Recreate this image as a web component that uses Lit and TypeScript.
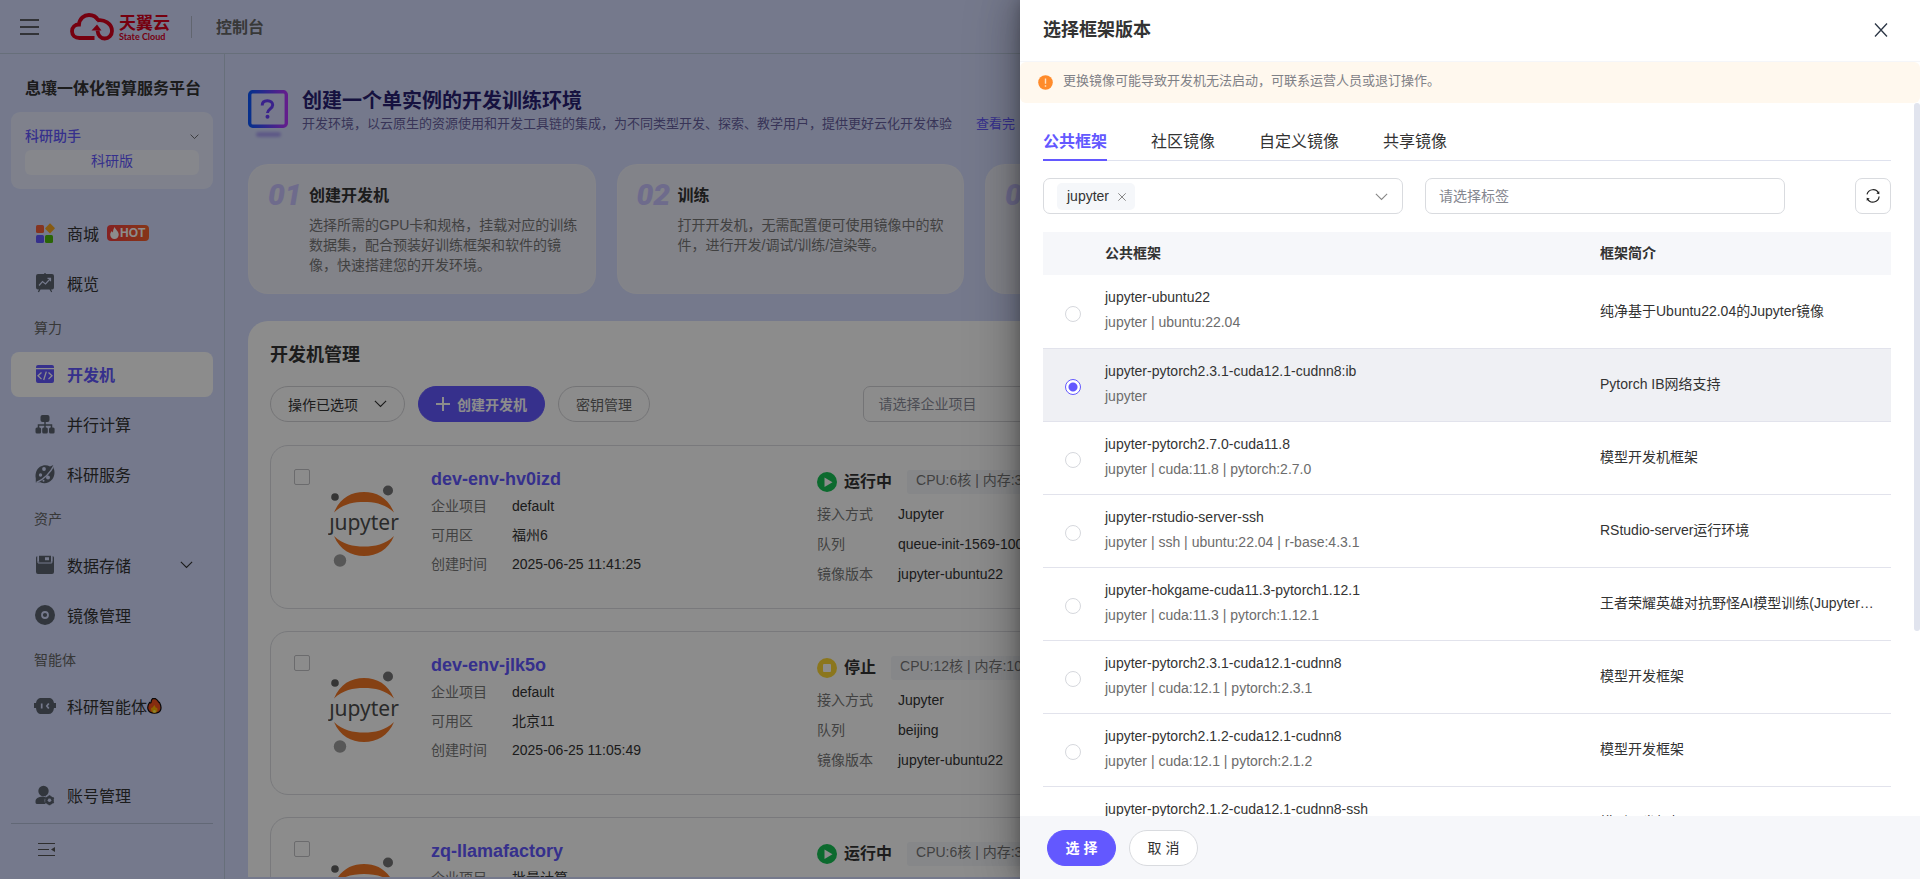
import { LitElement, html, svg, css, nothing } from "lit";
import { customElement, state } from "lit/decorators.js";
import { classMap } from "lit/directives/class-map.js";

interface Machine {
  name: string;
  project: string;
  zone: string;
  created: string;
  running: boolean;
  spec: string;
  access: string;
  queue: string;
  image: string;
}

interface Framework {
  name: string;
  tags: string;
  intro: string;
}

const MACHINES: Machine[] = [
  { name: "dev-env-hv0izd", project: "default", zone: "福州6", created: "2025-06-25 11:41:25", running: true, spec: "CPU:6核 | 内存:30GB", access: "Jupyter", queue: "queue-init-1569-1000", image: "jupyter-ubuntu22" },
  { name: "dev-env-jlk5o", project: "default", zone: "北京11", created: "2025-06-25 11:05:49", running: false, spec: "CPU:12核 | 内存:108GB", access: "Jupyter", queue: "beijing", image: "jupyter-ubuntu22" },
  { name: "zq-llamafactory", project: "批量计算", zone: "", created: "", running: true, spec: "CPU:6核 | 内存:30GB", access: "", queue: "", image: "" },
];

const FRAMEWORKS: Framework[] = [
  { name: "jupyter-ubuntu22", tags: "jupyter | ubuntu:22.04", intro: "纯净基于Ubuntu22.04的Jupyter镜像" },
  { name: "jupyter-pytorch2.3.1-cuda12.1-cudnn8:ib", tags: "jupyter", intro: "Pytorch IB网络支持" },
  { name: "jupyter-pytorch2.7.0-cuda11.8", tags: "jupyter | cuda:11.8 | pytorch:2.7.0", intro: "模型开发机框架" },
  { name: "jupyter-rstudio-server-ssh", tags: "jupyter | ssh | ubuntu:22.04 | r-base:4.3.1", intro: "RStudio-server运行环境" },
  { name: "jupyter-hokgame-cuda11.3-pytorch1.12.1", tags: "jupyter | cuda:11.3 | pytorch:1.12.1", intro: "王者荣耀英雄对抗野怪AI模型训练(Jupyter镜像)" },
  { name: "jupyter-pytorch2.3.1-cuda12.1-cudnn8", tags: "jupyter | cuda:12.1 | pytorch:2.3.1", intro: "模型开发框架" },
  { name: "jupyter-pytorch2.1.2-cuda12.1-cudnn8", tags: "jupyter | cuda:12.1 | pytorch:2.1.2", intro: "模型开发框架" },
  { name: "jupyter-pytorch2.1.2-cuda12.1-cudnn8-ssh", tags: "jupyter | ssh | cuda:12.1 | pytorch:2.1.2", intro: "模型开发框架" },
];

const chevron = (size = 12) => html`<svg class="chevron" width=${size} height=${size} viewBox="0 0 12 12" fill="none" stroke="currentColor" stroke-width="1" aria-hidden="true"><path d="M.8 3.5 6 8.7l5.2-5.2" /></svg>`;

const icons = {
  shop: svg`<rect x="1" y="2" width="8" height="8" rx="1.5" fill="#f2603b"/><path d="m15 .2 4.6 4.6a.8.8 0 0 1 0 1L15 10.500 10.400 5.900a.8.8 0 0 1 0-1z" fill="#f5a623"/><rect x="1" y="12" width="8" height="8" rx="1.500" fill="#6358ff"/><rect x="10" y="12" width="8" height="8" rx="1.500" fill="#4db80b"/>`,
  overview: svg`<path d="M9.300 0h1.400v1h6.300a2 2 0 0 1 2 2v11.500a2 2 0 0 1-2 2h-1l1.200 2.200-1 .6L14.500 16.500h-9L4 19.300l-1.200-.6L4 16.500H3a2 2 0 0 1-2-2V3a2 2 0 0 1 2-2h6.300z"/><path d="m4 12.500 3.500-4 3 2.500 5-5.500M12.500 5.300h3v3" fill="none" stroke="#d5ddff" stroke-width="1.200"/>`,
  code: svg`<path d="M3 1h14a2 2 0 0 1 2 2v1H1V3a2 2 0 0 1 2-2zM1 5.200h18V17a2 2 0 0 1-2 2H3a2 2 0 0 1-2-2z"/><path d="M6.500 8.500 3 11.800l3.500 3.300M13.500 8.500l3.500 3.300-3.500 3.300M11.300 7.600l-2.600 8.400" fill="none" stroke="#fff" stroke-width="1.300"/>`,
  cluster: svg`<rect x="5.500" y="1" width="9" height="7" rx="2"/><path d="M10 7.500v7M3.500 14v-3h13v3" fill="none" stroke="currentColor" stroke-width="1.500"/><rect x=".5" y="13.500" width="5.600" height="6" rx="1.500"/><rect x="7.200" y="13.500" width="5.600" height="6" rx="1.500"/><rect x="14" y="13.500" width="5.600" height="6" rx="1.500"/>`,
  research: svg`<path d="M15 2.500 18.500 1v3c1.500 3 1.500 8-1.200 11.300C14 19.500 9 20.300 5.300 18.300L.8 18.500v-4C-.2 9.500 1.800 5 5 2.800 8 .8 12 .7 15 2.500z"/><path d="M19.500.5c-4 8-9 14-18 18" fill="none" stroke="#d5ddff" stroke-width="1.500"/><g fill="#d5ddff"><circle cx="9" cy="5" r="1.900"/><circle cx="5.500" cy="11" r="1.700"/><circle cx="13" cy="13.500" r="2"/><circle cx="8.500" cy="16.800" r="1"/></g>`,
  storage: svg`<path d="M2.500 1v5.500h15V1C18.500 1 19 2 19 3v14a2 2 0 0 1-2 2H3a2 2 0 0 1-2-2V3c0-1 .5-2 1.500-2z"/><path d="M4 .8h12V6a1 1 0 0 1-1 1H5a1 1 0 0 1-1-1zm6 1.500v3h4v-3z" fill-rule="evenodd"/><path d="M3 1v7h13.800V1" fill="none" stroke="#d5ddff" stroke-width="1"/>`,
  image: svg`<circle cx="10" cy="10" r="10"/><circle cx="10" cy="10" r="3" fill="none" stroke="#d5ddff" stroke-width="1.800"/>`,
  robot: svg`<path d="M6.500 2h7c3.500 0 5 2 5.500 5h2v5h-2c-.5 4-2.500 6-5.500 6h-7C3 18 1.500 16 1 12h-2V7h2c.5-3 2-5 5.500-5z"/><path d="M6.700 7.500v5M13.800 7.500 11.800 10l2 2.500" fill="none" stroke="#d5ddff" stroke-width="1.700"/>`,
  account: svg`<circle cx="8.500" cy="6" r="5.200"/><path d="M8 11.500c1 .6 2 .6 3 0-2 2.500-1.800 5-.5 7.500H2c-1.500 0-1.500-1-1.500-2.500C.5 13.500 3 11.800 8 11.500z"/><circle cx="14.500" cy="15.300" r="3.200" fill="none" stroke="currentColor" stroke-width="2.400"/><path d="M14.500 10.300v10M10.200 12.800l8.600 5M18.800 12.800l-8.600 5" stroke="currentColor" stroke-width="1.800"/><circle cx="14.500" cy="15.300" r="1.700" fill="#d5ddff"/>`,
};

const icon = (name: keyof typeof icons) => html`<svg class="nav-icon" width="20" height="20" viewBox="0 0 20 20" fill="currentColor" aria-hidden="true">${icons[name]}</svg>`;

const jupyterLogo = html`<svg class="logo" width="72" height="84" viewBox="0 0 72 84" role="img" aria-label="jupyter">
  <circle cx="7" cy="13" r="3.800" fill="#616262" /><circle cx="60" cy="6.500" r="5" fill="#767677" /><circle cx="12" cy="76.500" r="6.200" fill="#9e9e9e" />
  <path d="M6 28.500C12 14 23 8 36 8s24 6 30 20.500C57 20 47 18 36 18S15 20 6 28.500z" fill="#f37726" />
  <path d="M6 52c6 14 17 20 30 20s24-6 30-20c-9 8.500-19 10.500-30 10.500S15 60.500 6 52z" fill="#f37726" />
  <text x="36" y="46" text-anchor="middle" class="logo-text">ȷupyter</text>
</svg>`;

@customElement("side-nav")
export class SideNav extends LitElement {
  static styles = css`
    :host { display: flex; flex-direction: column; flex: none; box-sizing: border-box; width: 225px; padding: 20px 11px 6px; border-right: 1px solid #bccadf; color: #333; }
    * { box-sizing: border-box; }
    h2 { margin: 0; padding-left: 14px; font-size: 16px; line-height: 30px; font-weight: 700; white-space: nowrap; }
    .product { margin-top: 8px; padding: 14px; height: 77px; border-radius: 9px; background: rgba(255, 255, 255, .45); }
    .picker { display: flex; align-items: center; justify-content: space-between; width: 100%; height: 20px; padding: 0; border: 0; background: none; font-family: inherit; font-size: 14px; font-weight: 500; line-height: 20px; color: #6358ff; }
    .picker .chevron { color: #444; }
    .edition { margin-top: 4px; height: 25px; line-height: 22px; border-radius: 6px; background: rgba(255, 255, 255, .5); text-align: center; font-size: 14px; color: #6358ff; }
    nav { display: flex; flex-direction: column; flex: 1; margin-top: 22px; }
    ul { display: flex; flex-direction: column; gap: 5px; list-style: none; margin: 0; padding: 0; }
    h3 { margin: 0; padding-left: 23px; height: 46px; font-size: 14px; line-height: 44px; font-weight: 400; color: #666; }
    a { display: flex; align-items: center; height: 45px; padding: 0 20px 2px 24px; border-radius: 8px; font-size: 16px; color: #333; text-decoration: none; white-space: nowrap; }
    a.active { background: #fff; color: #6358ff; font-weight: 700; }
    .nav-icon { flex: none; margin-right: 12px; color: #5b6370; overflow: visible; }
    .active .nav-icon { color: #6358ff; }
    .hot { display: inline-flex; align-items: center; gap: 1px; margin-left: 8px; height: 16px; width: 42px; padding: 0 3px; border-radius: 4px; background: linear-gradient(90deg, #f23d3d, #f5622d); color: #fff; font-size: 12px; font-weight: 700; }
    .grow { flex: 1; }
    .bottom { margin-top: auto; }
    .fold { display: flex; height: 50px; padding: 3px 0 0 27px; align-items: center; border: 0; border-top: 1px solid #b3bed8; margin-top: 5px; width: 100%; background: none; color: #555; }
  `;

  private item(name: keyof typeof icons, label: string, opts: { active?: boolean; extra?: unknown } = {}) {
    return html`<li><a href="#" class=${classMap({ active: !!opts.active })}>${icon(name)}<span>${label}</span>${opts.extra ?? nothing}</a></li>`;
  }

  render() {
    const hot = html`<span class="hot"><svg width="9" height="12" viewBox="0 0 9 12" fill="#fff" aria-hidden="true"><path d="M4.800 0c.3 2.500 3.900 4 3.900 7.500A4.200 4.200 0 0 1 4.500 12 4.200 4.200 0 0 1 .2 7.700c0-1.700 1-2.700 1.600-3.700.4.800.7 1.200 1.200 1.500C3 3.500 3.500 1.500 4.800 0z"/></svg>HOT</span>`;
    const fire = html`<svg width="15" height="16" viewBox="0 0 15 16" aria-hidden="true"><path d="M5.500.7h3C12 3 11.500 5 12.500 4.500c2.500 4.500 2.500 10.700-5 10.700S-.5 9 2.500 4.500c.5.700 1 .5 1.500 0C4.500 3 4 2 5.500.7z" fill="#f4511e" stroke="#111" stroke-width="1.200"/><path d="M4 11c.5-2 1-1 1.500-1.500L7.500 7l1.500 3c1-.5 1.500 0 1.500 2 0 4-6.500 4-6.500-1z" fill="#ffb300"/><path d="M6 13c.5-1.500 2-1.500 3 0 0 2-3 2-3 0z" fill="#ffee58"/></svg>`;
    return html`
      <h2>息壤一体化智算服务平台</h2>
      <div class="product">
        <button class="picker">科研助手 ${chevron(9)}</button>
        <div class="edition">科研版</div>
      </div>
      <nav>
        <ul>${this.item("shop", "商城", { extra: hot })}${this.item("overview", "概览")}</ul>
        <h3>算力</h3>
        <ul>${this.item("code", "开发机", { active: true })}${this.item("cluster", "并行计算")}${this.item("research", "科研服务")}</ul>
        <h3>资产</h3>
        <ul>${this.item("storage", "数据存储", { extra: html`<span class="grow"></span>${chevron(13)}` })}${this.item("image", "镜像管理")}</ul>
        <h3>智能体</h3>
        <ul>${this.item("robot", "科研智能体", { extra: fire })}</ul>
        <ul class="bottom">${this.item("account", "账号管理")}</ul>
      </nav>
      <button class="fold" aria-label="收起菜单"><svg width="18" height="16" viewBox="0 0 18 16" fill="none" stroke="currentColor" stroke-width="1.200"><path d="M0 1.500h17M0 7.500h11M0 13.500h17"/><path d="m17 5-4 2.500 4 2.500z" fill="currentColor" stroke="none"/></svg></button>
    `;
  }
}

@customElement("machine-page")
export class MachinePage extends LitElement {
  static styles = css`
    :host { display: flex; flex-direction: column; flex: 1; min-width: 0; min-height: 0; box-sizing: border-box; padding: 35px 24px 2px 23px; color: #333; overflow: hidden; }
    * { box-sizing: border-box; }
    .hero { display: flex; gap: 14px; }
    .hero h1 { margin: 0; font-size: 20px; line-height: 24px; font-weight: 700; color: #291f73; }
    .hero p { margin: 0; font-size: 13px; line-height: 22px; color: #675f9f; white-space: nowrap; }
    .hero a { margin-left: 24px; color: #6358ff; text-decoration: none; }
    .hero-icon { margin-top: 1px; }
    .steps { display: grid; grid-template-columns: repeat(4, minmax(0, 1fr)); gap: 21px; margin: 24px 195px 0 0; padding: 0; list-style: none; }
    .steps li { display: flex; height: 130px; padding: 16px 17px 0 19px; border-radius: 20px; border: 1px solid rgba(255, 255, 255, .2); background: #edeef9; }
    .no { flex: none; width: 41px; font: italic 900 30px/28px Roboto, sans-serif; color: #c8c3ff; }
    .steps h2 { margin: 4px 0 8px; font-size: 16px; line-height: 22px; font-weight: 700; }
    .steps p { margin: 0; font-size: 14px; line-height: 20px; color: #777; }
    .panel { display: flex; flex-direction: column; flex: 1; min-height: 0; overflow: hidden; margin-top: 27px; padding: 20px 22px 0; border-radius: 20px 20px 0 0; background: #fff; }
    .panel h2 { margin: 0; font-size: 18px; line-height: 28px; font-weight: 700; }
    .bar { display: flex; gap: 13px; margin-top: 17px; }
    .bar button { display: flex; align-items: center; height: 36px; padding: 0 17px 1px; border: 1px solid #d4d4d8; border-radius: 18px; background: #fff; font: inherit; font-size: 14px; color: #333; }
    .bar .primary { background: #6358ff; border-color: #6358ff; color: #fff; font-weight: 700; gap: 7px; }
    .bar .plain { color: #666; }
    .bar .chevron { margin-left: 16px; }
    .filters { display: flex; margin-left: auto; width: 63%; }
    .filters select { width: 360px; height: 36px; padding: 0 14px; border: 1px solid #d4d4d8; border-radius: 7px; background: #fff; appearance: none; font: inherit; font-size: 14px; color: #8b8d9a; }
    .machines { display: flex; flex-direction: column; gap: 22px; margin-top: 23px; }
    .machine { display: flex; flex: none; height: 164px; padding: 20px 23px; border: 1px solid #dcdde2; border-radius: 18px; }
    .machine > input { appearance: none; flex: none; width: 16px; height: 16px; margin: 3px 18px 0 0; border: 1px solid #c3c3c6; border-radius: 2px; background: #fff; }
    .logo { flex: none; margin-top: 18px; width: 72px; height: 84px; }
    .logo-text { font: 400 21px "Noto Sans", sans-serif; fill: #4e4e4e; }
    .left { flex: none; width: 386px; margin-left: 31px; }
    .right { flex: 1; min-width: 0; }
    .name { display: block; font-size: 18px; line-height: 26px; font-weight: 700; color: #6358ff; text-decoration: none; }
    dl { display: grid; grid-template-columns: 81px 1fr; margin: 0; font-size: 14px; white-space: nowrap; }
    .left dl { line-height: 29px; }
    .right dl { line-height: 30px; margin-top: 1px; }
    dt { color: #787878; }
    dd { margin: 0; }
    .status { display: flex; align-items: center; height: 32px; white-space: nowrap; }
    .status b { margin: 0 15px 0 7px; font-size: 16px; line-height: 24px; }
    .spec { height: 24px; padding: 0 9px; border-radius: 3px; background: #f5f6fa; font-size: 14px; line-height: 20px; color: #777; }
  `;

  private machine(m: Machine) {
    const shape = m.running ? svg`<path d="M7.500 5.500v9.500l8-4.700z" fill="#fff"/>` : svg`<rect x="6" y="6" width="8" height="8" rx="1" fill="#fff"/>`;
    return html`
      <article class="machine">
        <input type="checkbox" aria-label=${m.name} />
        ${jupyterLogo}
        <div class="left">
          <a class="name" href="#">${m.name}</a>
          <dl><dt>企业项目</dt><dd>${m.project}</dd><dt>可用区</dt><dd>${m.zone}</dd><dt>创建时间</dt><dd>${m.created}</dd></dl>
        </div>
        <div class="right">
          <div class="status">
            <svg width="20" height="20" viewBox="0 0 20 20" aria-hidden="true"><circle cx="10" cy="10" r="10" fill=${m.running ? "#16c154" : "#fdd835"}/>${shape}</svg>
            <b>${m.running ? "运行中" : "停止"}</b><span class="spec">${m.spec}</span>
          </div>
          <dl><dt>接入方式</dt><dd>${m.access}</dd><dt>队列</dt><dd>${m.queue}</dd><dt>镜像版本</dt><dd>${m.image}</dd></dl>
        </div>
      </article>`;
  }

  render() {
    return html`
      <header class="hero">
        <svg class="hero-icon" width="40" height="50" viewBox="0 0 40 50" aria-hidden="true">
          <defs><linearGradient id="g"><stop stop-color="#0b57ff"/><stop offset="1" stop-color="#b437ff"/></linearGradient><filter id="b" x="-20%" y="-80%" width="140%" height="260%"><feGaussianBlur stdDeviation="1.800"/></filter></defs>
          <rect x="8" y="42" width="25" height="5" rx="2.500" fill="#aaa2f5" filter="url(#b)"/>
          <rect x="1.700" y="1.700" width="36.600" height="34.600" rx="3" fill="#d9dcff" stroke="url(#g)" stroke-width="3.400"/>
          <path d="M14.200 15.500c0-3.300 2.300-4.800 5.200-4.800 3.200 0 5.300 1.700 5.300 4.300 0 3.700-5.200 4-5.200 8" fill="none" stroke="#6a3fff" stroke-width="3"/><circle cx="19.500" cy="26.800" r="2" fill="#6a3fff"/>
        </svg>
        <div>
          <h1>创建一个单实例的开发训练环境</h1>
          <p>开发环境，以云原生的资源使用和开发工具链的集成，为不同类型开发、探索、教学用户，提供更好云化开发体验<a href="#">查看完</a></p>
        </div>
      </header>
      <ol class="steps">
        <li><span class="no">01</span><div><h2>创建开发机</h2><p>选择所需的GPU卡和规格，挂载对应的训练数据集，配合预装好训练框架和软件的镜像，快速搭建您的开发环境。</p></div></li>
        <li><span class="no">02</span><div><h2>训练</h2><p>打开开发机，无需配置便可使用镜像中的软件，进行开发/调试/训练/渲染等。</p></div></li>
        <li><span class="no">03</span></li>
        <li></li>
      </ol>
      <section class="panel">
        <h2>开发机管理</h2>
        <div class="bar">
          <button>操作已选项 ${chevron(13)}</button>
          <button class="primary"><svg width="14" height="14" viewBox="0 0 14 14" stroke="#fff" stroke-width="2" aria-hidden="true"><path d="M7 0v14M0 7h14"/></svg>创建开发机</button>
          <button class="plain">密钥管理</button>
          <div class="filters"><select aria-label="企业项目"><option>请选择企业项目</option></select></div>
        </div>
        <div class="machines">${MACHINES.map((m) => this.machine(m))}</div>
      </section>
    `;
  }
}

@customElement("framework-drawer")
export class FrameworkDrawer extends LitElement {
  @state() private selected = 1;

  static styles = css`
    :host { display: flex; flex-direction: column; width: 900px; max-width: 100%; height: 100%; background: #fff; color: #333; box-shadow: 0 0 54px 8px rgba(0, 0, 0, .12), 0 0 36px rgba(0, 0, 0, .3), 0 0 12px rgba(0, 0, 0, .2); }
    * { box-sizing: border-box; }
    button, input { font: inherit; }
    header { display: flex; align-items: center; justify-content: space-between; height: 62px; padding: 0 32px 2px 23px; border-bottom: 1px solid #f5f6f9; }
    h2 { margin: 0; font-size: 18px; line-height: 28px; font-weight: 700; }
    .close { display: flex; padding: 0; border: 0; background: none; color: #2b3645; }
    .alert { display: flex; align-items: center; gap: 10px; height: 41px; padding: 0 18px 1px; border-radius: 6px; background: #fff8ee; font-size: 13px; line-height: 18px; color: #7f8187; }
    .alert .text { padding-bottom: 2px; }
    .wrap { display: flex; flex: 1; min-height: 0; }
    .body { flex: 1; min-width: 0; overflow: hidden; padding: 18px 23px 0; }
    .track { flex: none; width: 6px; }
    .thumb { height: 74%; border-radius: 5px; background: #e1e4ee; }
    .tabs { display: flex; gap: 44px; height: 40px; border-bottom: 1px solid #dfe2ee; }
    .tabs button { height: 40px; padding: 0; border: 0; border-bottom: 2px solid transparent; background: none; font-size: 16px; color: #333; }
    .tabs .on { font-weight: 700; color: #6358ff; border-color: #6358ff; }
    .query { display: flex; gap: 22px; margin-top: 17px; }
    .field { display: flex; align-items: center; width: 360px; height: 36px; padding: 0 14px 0 13px; border: 1px solid #d9dbdf; border-radius: 7px; background: #fff; font-size: 14px; }
    .field input { flex: 1; min-width: 0; border: 0; padding: 0; outline: 0; background: none; color: #333; }
    .field input::placeholder { color: #85878f; opacity: 1; }
    .field .chevron { color: #888; }
    .chip { display: flex; align-items: center; height: 27px; padding: 0 9px 0 10px; border-radius: 5px; background: #f5f7fa; }
    .chip button { display: flex; margin-left: 9px; padding: 2px 0 0; border: 0; background: none; color: #888; }
    .refresh { display: flex; align-items: center; justify-content: center; width: 36px; height: 36px; margin-left: auto; padding: 0; border: 1px solid #d9dbdf; border-radius: 7px; background: #fff; color: #222; }
    table { width: 100%; margin-top: 18px; border-collapse: collapse; table-layout: fixed; font-size: 14px; text-align: left; }
    .c-pick { width: 62px; }
    .c-intro { width: 291px; }
    th { height: 43px; padding: 0 0 4px; background: #f6f7fa; font-weight: 700; }
    td { height: 73px; padding: 0 0 2px; border-bottom: 1px solid #e2e3ec; vertical-align: middle; }
    tr.picked td { background: #eff0f4; }
    td.pick { padding: 5px 0 0 22px; }
    td.pick input { appearance: none; display: block; width: 16px; height: 16px; margin: 0; border: 1px solid #d6d8dd; border-radius: 50%; background: #fff; }
    td.pick input:checked { border-color: #6358ff; background: radial-gradient(circle, #6358ff 4px, #fff 5px); }
    .fw { display: block; line-height: 25px; }
    .sub { color: #6c6c6c; }
    td.intro { padding: 0 12px 3px 0; overflow: hidden; text-overflow: ellipsis; white-space: nowrap; }
    footer { display: flex; gap: 13px; height: 63px; padding: 14px 27px; background: #f6f7fa; }
    footer button { width: 69px; height: 36px; padding: 0 0 2px; border: 1px solid #d9dbdf; border-radius: 18px; background: #fff; font-size: 14px; color: #333; }
    footer .primary { border-color: #6358ff; background: #6358ff; color: #fff; font-weight: 700; }
  `;

  render() {
    return html`
      <header>
        <h2>选择框架版本</h2>
        <button class="close" aria-label="关闭"><svg width="14" height="14" viewBox="0 0 14 14" fill="none" stroke="currentColor" stroke-width="1.300"><path d="m1 .5 12 13M13 .5 1 13.500"/></svg></button>
      </header>
      <div class="alert" role="alert">
        <svg width="15" height="15" viewBox="0 0 15 15" aria-hidden="true"><circle cx="7.500" cy="7.500" r="7.300" fill="#ff8b2b"/><path d="M7.500 3.500v5.200M7.500 10.200v1.500" stroke="#ffe2c4" stroke-width="1.400"/></svg>
        <span class="text">更换镜像可能导致开发机无法启动，可联系运营人员或退订操作。</span>
      </div>
      <div class="wrap">
        <div class="body">
          <div class="tabs" role="tablist">
            <button role="tab" class="on" aria-selected="true">公共框架</button>
            <button role="tab">社区镜像</button>
            <button role="tab">自定义镜像</button>
            <button role="tab">共享镜像</button>
          </div>
          <div class="query">
            <div class="field">
              <span class="chip">jupyter<button aria-label="移除 jupyter"><svg width="8" height="8" viewBox="0 0 8 8" stroke="currentColor"><path d="m.3.3 7.400 7.400M7.700.3.300 7.700"/></svg></button></span>
              <input type="text" aria-label="框架" />
              ${chevron(13)}
            </div>
            <label class="field"><input type="text" aria-label="标签" placeholder="请选择标签" /></label>
            <button class="refresh" aria-label="刷新"><svg width="16" height="16" viewBox="0 0 16 16" fill="none" stroke="currentColor" stroke-width="1.200"><path d="M2 6.300A6.200 6.200 0 0 1 13.700 5.500M14.100 8.500A6.200 6.200 0 0 1 2.400 10.700"/><path d="M14.300 3.200v3l-3-.6zM1.700 12.800v-3l3 .6z" fill="currentColor" stroke="none"/></svg></button>
          </div>
          <table>
            <colgroup><col class="c-pick" /><col /><col class="c-intro" /></colgroup>
            <thead><tr><th></th><th>公共框架</th><th>框架简介</th></tr></thead>
            <tbody>
              ${FRAMEWORKS.map((f, i) => html`
                <tr class=${classMap({ picked: i === this.selected })}>
                  <td class="pick"><input type="radio" name="framework" aria-label=${f.name} .checked=${i === this.selected} @change=${() => (this.selected = i)} /></td>
                  <td><span class="fw">${f.name}</span><span class="fw sub">${f.tags}</span></td>
                  <td class="intro">${f.intro}</td>
                </tr>`)}
            </tbody>
          </table>
        </div>
        <div class="track"><div class="thumb"></div></div>
      </div>
      <footer><button class="primary">选 择</button><button>取 消</button></footer>
    `;
  }
}

@customElement("app-root")
export class AppRoot extends LitElement {
  static styles = css`
    :host { display: flex; flex-direction: column; position: relative; box-sizing: border-box; height: 100vh; overflow: hidden; background: #d5ddff; font-family: "Liberation Sans", "Noto Sans CJK SC", sans-serif; font-size: 14px; color: #333; }
    .top { display: flex; flex: none; align-items: center; box-sizing: border-box; height: 54px; padding: 0 20px; border-bottom: 1px solid #bccadf; }
    .burger { display: flex; padding: 0; border: 0; background: none; }
    .brand { display: flex; align-items: center; gap: 5px; margin-left: 31px; color: #d7001d; text-decoration: none; }
    .brand-text { display: flex; flex-direction: column; padding-top: 3px; }
    .cn { font-size: 17px; line-height: 17px; font-weight: 700; }
    .en { font: 700 9px/10px Lato, sans-serif; white-space: nowrap; }
    .sep { width: 1px; height: 22px; margin: 0 24px 0 21px; background: #b1b8cb; }
    .console { padding-bottom: 2px; font-size: 16px; font-weight: 700; color: #666; }
    .content { display: flex; flex: 1; min-height: 0; }
    .mask { position: absolute; inset: 0; display: flex; justify-content: flex-end; overflow: hidden; background: rgba(0, 0, 0, .45); }
  `;

  render() {
    return html`
      <div class="top">
        <button class="burger" aria-label="菜单"><svg width="19" height="16" viewBox="0 0 19 16" stroke="#333" stroke-width="1.600"><path d="M0 1h19M0 8h19M0 15h19"/></svg></button>
        <a class="brand" href="#">
          <svg width="44" height="28" viewBox="0 0 44 28" fill="none" stroke="currentColor" aria-hidden="true">
            <path d="M24.500 25H9.500C5 25 2 22 2 18.200c0-4 3-6.700 7-6.700C9.500 5.500 14 2 19 2c4.500 0 7.500 2.200 9.200 5.200" stroke-width="3.800"/>
            <path d="M27 7.500c7-1.500 15 3 15 10.500 0 4.500-3.500 7.500-7.200 7.500-4 0-6.800-3-7.300-8" stroke-width="3.800"/>
            <path d="M27 11.500 21.500 17.500h10z" fill="currentColor" stroke="none"/>
          </svg>
          <span class="brand-text"><span class="cn">天翼云</span><span class="en">State Cloud</span></span>
        </a>
        <span class="sep"></span>
        <span class="console">控制台</span>
      </div>
      <div class="content"><side-nav></side-nav><machine-page></machine-page></div>
      <div class="mask"><framework-drawer role="dialog" aria-label="选择框架版本"></framework-drawer></div>
    `;
  }
}
